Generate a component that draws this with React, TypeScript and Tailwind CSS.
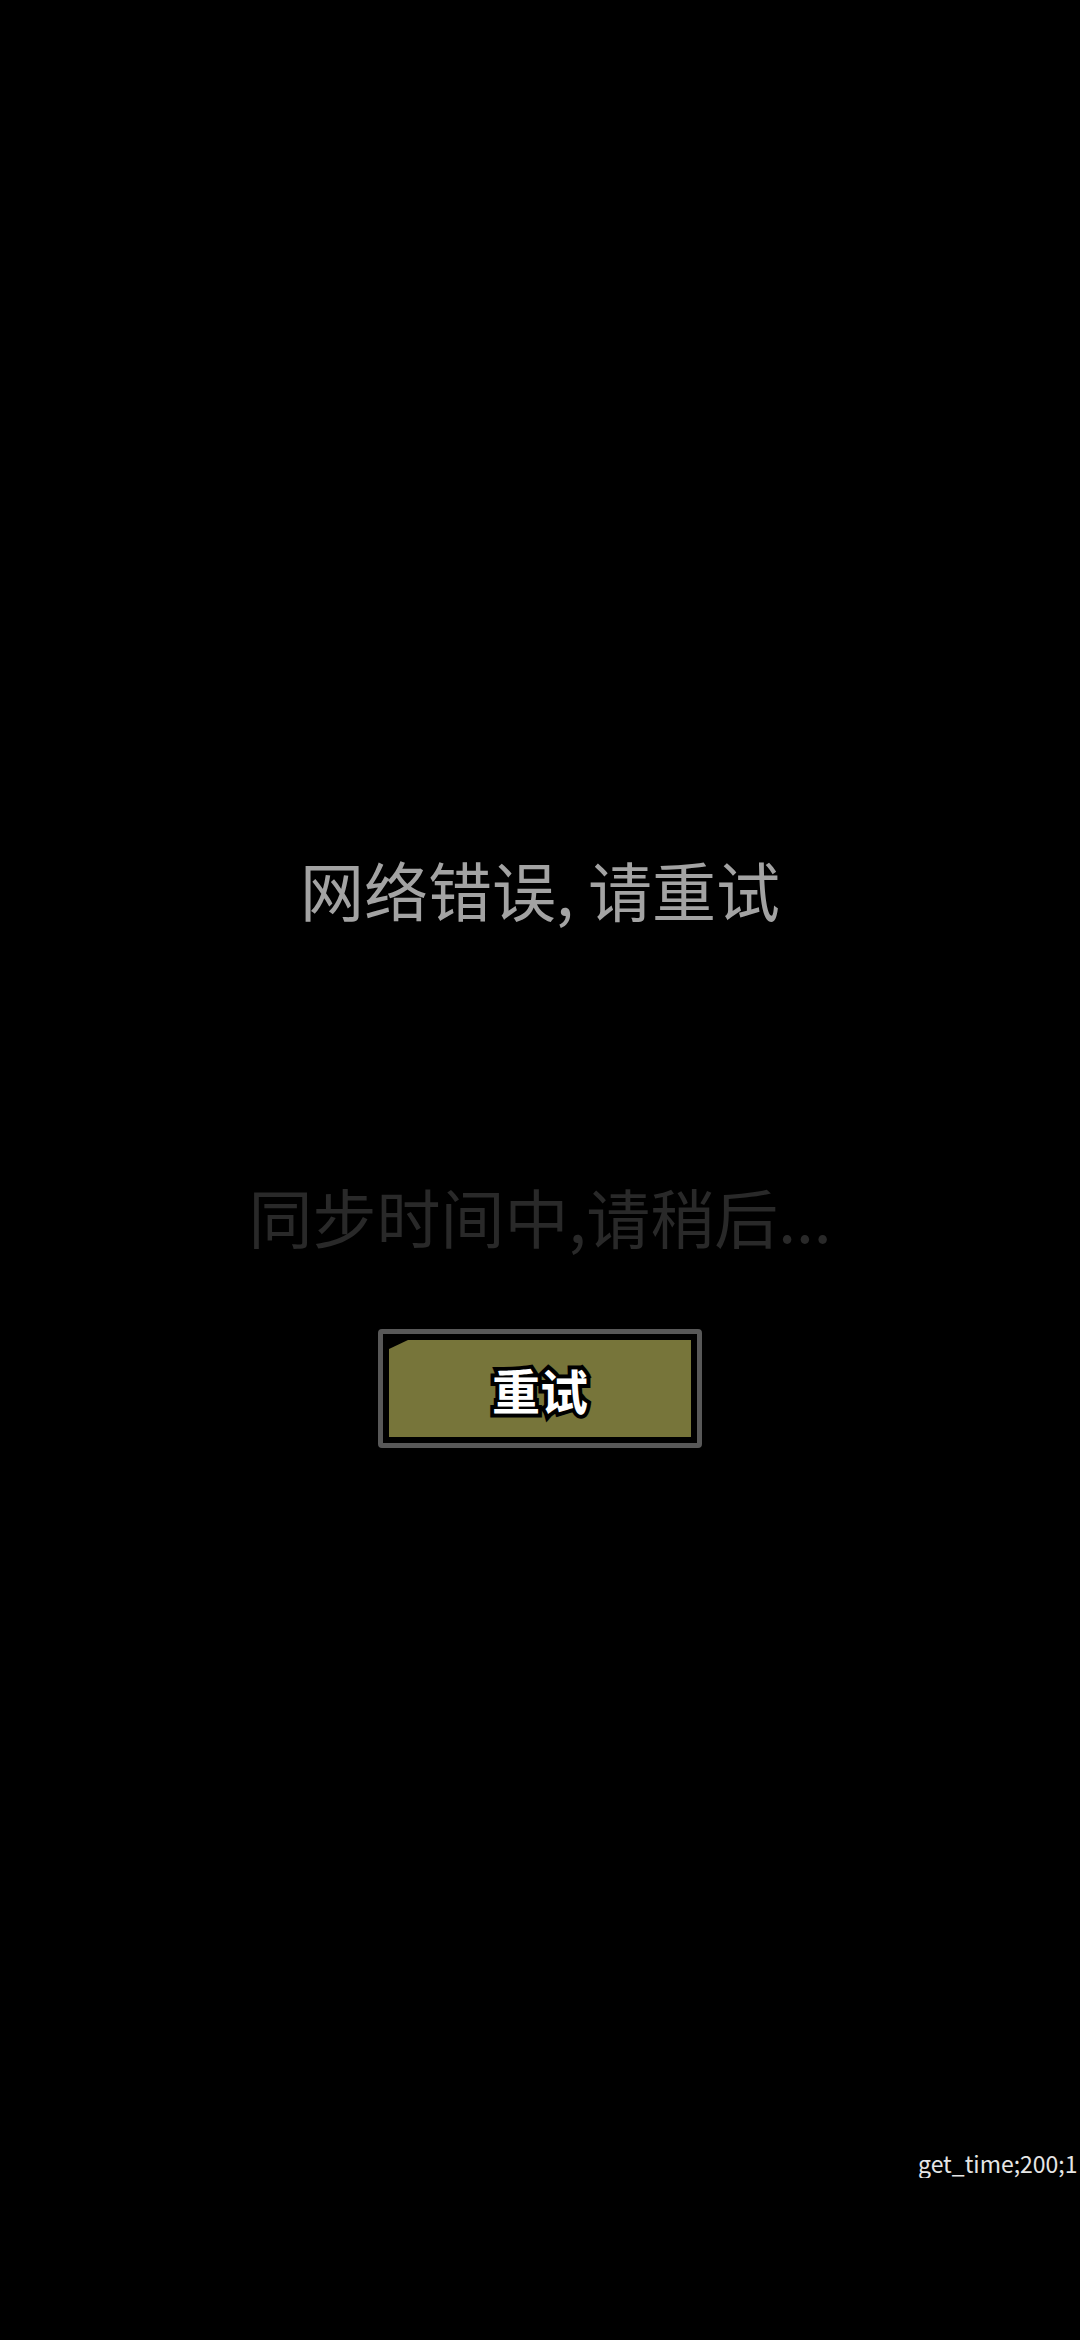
import React from "react";

export default function App() {
  return (
    <div
      className="relative flex min-h-[2340px] w-[1080px] flex-col items-center overflow-hidden bg-black"
      style={{ fontFamily: '"Noto Sans CJK SC", "Noto Sans", sans-serif' }}
    >
      <div className="mt-[856px] whitespace-nowrap text-[64px] leading-[64px] text-[#a3a3a3]">
        网络错误, 请重试
      </div>
      <div className="mt-[263px] whitespace-nowrap text-[64px] leading-[64px] text-[#292929]">
        同步时间中,请稍后...
      </div>
      <div className="mt-[82px] h-[119px] w-[324px] rounded-[4px] border-[5px] border-[#585858] bg-black p-[6px]">
        <div className="flex h-full w-full items-center justify-center bg-[#77753a] [clip-path:polygon(19px_0,100%_0,100%_100%,0_100%,0_9px)]">
          <span className="text-[48px] font-bold leading-[48px] text-white [-webkit-text-stroke:8px_black] [paint-order:stroke_fill]">
            重试
          </span>
        </div>
      </div>
      <div className="mt-[700px] w-full overflow-hidden whitespace-nowrap pl-[918px] text-[23px] leading-[30px] text-[#e6e6e6]">
        get_time;200;1
      </div>
    </div>
  );
}
